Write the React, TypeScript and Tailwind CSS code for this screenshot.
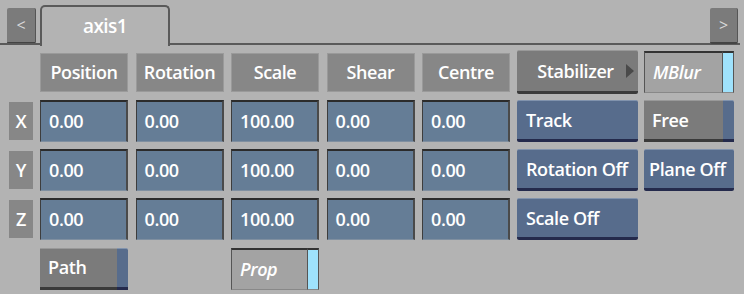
import React from 'react';

const font = { fontFamily: '"Open Sans", "Liberation Sans", Arial, sans-serif' };

const headers = ['Position', 'Rotation', 'Scale', 'Shear', 'Centre'];

const rows = [
  { axis: 'X', values: ['0.00', '0.00', '100.00', '0.00', '0.00'], action: 'Track', extra: 'free' },
  { axis: 'Y', values: ['0.00', '0.00', '100.00', '0.00', '0.00'], action: 'Rotation Off', extra: 'plane' },
  { axis: 'Z', values: ['0.00', '0.00', '100.00', '0.00', '0.00'], action: 'Scale Off', extra: null },
];

const txt = 'text-white font-semibold text-[18px] tracking-[-0.4px]';

function BlueButton({ label, className = '' }: { label: string; className?: string }) {
  return (
    <div
      className={`h-[42px] flex items-center bg-[#576c8c] border-t border-[#8193ad] border-b-[3px] border-b-[#242a4c] rounded-[2px] ${txt} ${className}`}
    >
      {label}
    </div>
  );
}

function Field({ value }: { value: string }) {
  return (
    <div
      className={`h-[42px] flex items-center pl-2 bg-[#657d96] border-t-2 border-t-[#2b2b2b] border-l border-l-[#3d3d3d] border-r-2 border-r-[#4a4a4a] border-b border-b-[#7f8fa0] ${txt}`}
    >
      {value}
    </div>
  );
}

function ToggleGray({ label, italic, light }: { label: string; italic?: boolean; light?: boolean }) {
  return (
    <div className="h-[42px] flex">
      <div
        className={`flex-1 flex items-center pl-2 ${txt} ${
          light
            ? 'bg-[#a3a3a3] border-t-2 border-t-[#333] border-l border-l-[#555] border-b border-b-[#888]'
            : 'bg-[#7b7b7b] border-t border-t-[#999] border-b-[3px] border-b-[#3a3a3a]'
        } ${italic ? 'italic' : ''}`}
      >
        {label}
      </div>
      {light ? (
        <div className="w-[12px] bg-[#9fe2fc] border-t-2 border-t-[#333] border-l border-l-[#555] border-r border-r-[#555] border-b border-b-[#888]" />
      ) : (
        <div className="w-[11px] bg-[#576c8c] border-t border-t-[#8193ad] border-b-[3px] border-b-[#242a4c] rounded-tr-[2px]" />
      )}
    </div>
  );
}

export default function App() {
  return (
    <div className="w-[744px] h-[294px] bg-[#b3b3b3] overflow-hidden select-none" style={font}>
      {/* tab bar */}
      <div className="h-[46px] flex items-end relative">
        <div className="absolute left-0 right-[4px] bottom-[1px] h-[2px] bg-[#5a5a5a]" />
        <div className="ml-[7px] mb-[2px] w-[29px] h-[36px] bg-[#7b7b7b] border-b-2 border-b-[#444] border-r border-r-[#555] rounded-[2px] flex items-center justify-center text-[#d8d8d8] text-[16px]">
          &lt;
        </div>
        <div className="relative ml-[4px] w-[130px] h-[41px] bg-[#b3b3b3] border-2 border-b-0 border-[#5a5a5a] rounded-t-[5px] flex items-center justify-center text-white font-semibold text-[19px] tracking-[-0.6px] z-10">
          axis1
        </div>
        <div className="flex-1" />
        <div className="mr-[6px] mb-[2px] w-[28px] h-[36px] bg-[#7b7b7b] border-b-2 border-b-[#444] border-r border-r-[#555] rounded-[2px] flex items-center justify-center text-[#d8d8d8] text-[16px] z-10">
          &gt;
        </div>
      </div>

      {/* grid */}
      <div className="pl-[9px] pt-[5px] flex flex-col gap-[7px]">
        {/* header row */}
        <div className="flex items-center h-[42px]">
          <div className="w-[31px]" />
          <div className="grid grid-cols-[repeat(5,88px)] gap-x-[7.5px]">
            {headers.map((h) => (
              <div
                key={h}
                className={`h-[39px] bg-[#878787] border border-[#9a9a9a] flex items-center justify-center ${txt}`}
              >
                {h}
              </div>
            ))}
          </div>
          <div
            className={`ml-[7px] w-[121px] h-[44px] flex items-center bg-[#7b7b7b] border-t border-t-[#999] border-b-[3px] border-b-[#3a3a3a] rounded-[2px] ${txt}`}
          >
            <span className="flex-1 text-center pl-[8px]">Stabilizer</span>
            <svg width="8" height="14" viewBox="0 0 8 14" className="mr-[4px]">
              <polygon points="0,0 8,7 0,14" fill="#4a4a4a" />
            </svg>
          </div>
          <div className="ml-[6px] w-[90px]">
            <ToggleGray label="MBlur" italic light />
          </div>
        </div>

        {rows.map((r) => (
          <div key={r.axis} className="flex items-center h-[42px]">
            <div className={`w-[24px] h-[38px] bg-[#878787] flex items-center justify-center ${txt}`}>
              {r.axis}
            </div>
            <div className="w-[7px]" />
            <div className="grid grid-cols-[repeat(5,88px)] gap-x-[7.5px]">
              {r.values.map((v, i) => (
                <Field key={i} value={v} />
              ))}
            </div>
            <BlueButton label={r.action} className="ml-[7px] w-[121px] pl-[9px] whitespace-nowrap" />
            {r.extra === 'free' && (
              <div className="ml-[6px] w-[90px]">
                <ToggleGray label="Free" />
              </div>
            )}
            {r.extra === 'plane' && (
              <BlueButton label="Plane Off" className="ml-[6px] w-[90px] pl-[5px] whitespace-nowrap" />
            )}
          </div>
        ))}

        {/* bottom row */}
        <div className="flex items-center h-[43px]">
          <div className="w-[31px]" />
          <div className="grid grid-cols-[repeat(5,88px)] gap-x-[7.5px]">
            <ToggleGray label="Path" />
            <div />
            <ToggleGray label="Prop" italic light />
          </div>
        </div>
      </div>
    </div>
  );
}
